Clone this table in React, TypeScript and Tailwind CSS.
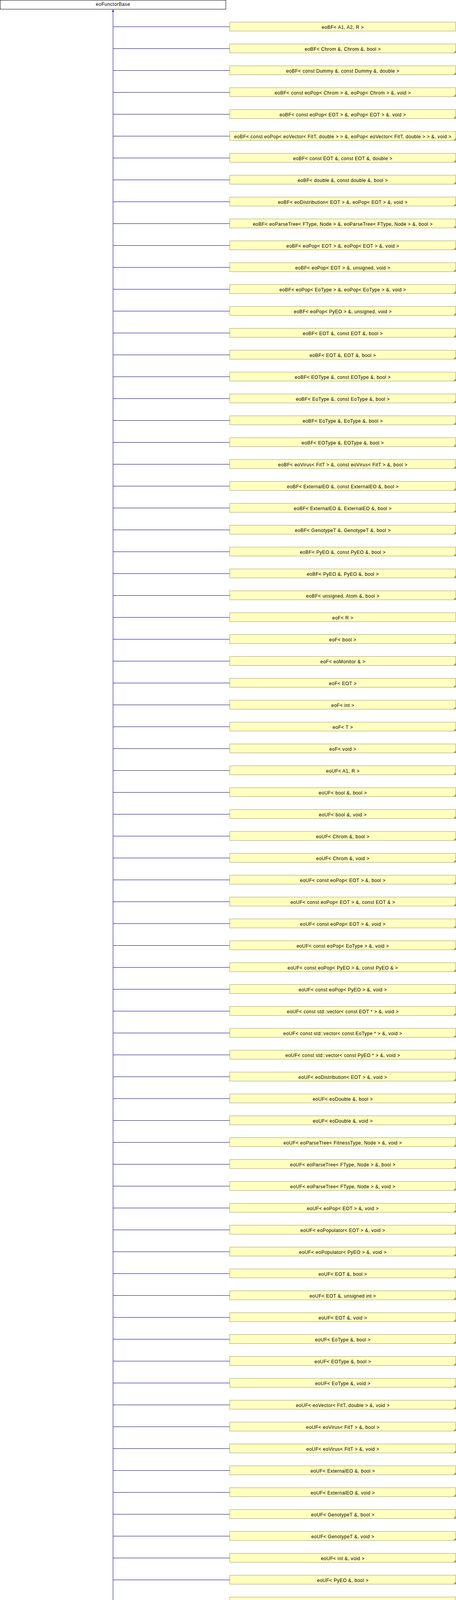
import React from "react";

// derived classes of eoFunctorBase, in graph order
const CHILDREN: string[] = [
  "eoBF< A1, A2, R >",
  "eoBF< Chrom &, Chrom &, bool >",
  "eoBF< const Dummy &, const Dummy &, double >",
  "eoBF< const eoPop< Chrom > &, eoPop< Chrom > &, void >",
  "eoBF< const eoPop< EOT > &, eoPop< EOT > &, void >",
  "eoBF< const eoPop< eoVector< FitT, double > > &, eoPop< eoVector< FitT, double > > &, void >",
  "eoBF< const EOT &, const EOT &, double >",
  "eoBF< double &, const double &, bool >",
  "eoBF< eoDistribution< EOT > &, eoPop< EOT > &, void >",
  "eoBF< eoParseTree< FType, Node > &, eoParseTree< FType, Node > &, bool >",
  "eoBF< eoPop< EOT > &, eoPop< EOT > &, void >",
  "eoBF< eoPop< EOT > &, unsigned, void >",
  "eoBF< eoPop< EoType > &, eoPop< EoType > &, void >",
  "eoBF< eoPop< PyEO > &, unsigned, void >",
  "eoBF< EOT &, const EOT &, bool >",
  "eoBF< EOT &, EOT &, bool >",
  "eoBF< EOType &, const EOType &, bool >",
  "eoBF< EoType &, const EoType &, bool >",
  "eoBF< EoType &, EoType &, bool >",
  "eoBF< EOType &, EOType &, bool >",
  "eoBF< eoVirus< FitT > &, const eoVirus< FitT > &, bool >",
  "eoBF< ExternalEO &, const ExternalEO &, bool >",
  "eoBF< ExternalEO &, ExternalEO &, bool >",
  "eoBF< GenotypeT &, GenotypeT &, bool >",
  "eoBF< PyEO &, const PyEO &, bool >",
  "eoBF< PyEO &, PyEO &, bool >",
  "eoBF< unsigned, Atom &, bool >",
  "eoF< R >",
  "eoF< bool >",
  "eoF< eoMonitor & >",
  "eoF< EOT >",
  "eoF< int >",
  "eoF< T >",
  "eoF< void >",
  "eoUF< A1, R >",
  "eoUF< bool &, bool >",
  "eoUF< bool &, void >",
  "eoUF< Chrom &, bool >",
  "eoUF< Chrom &, void >",
  "eoUF< const eoPop< EOT > &, bool >",
  "eoUF< const eoPop< EOT > &, const EOT & >",
  "eoUF< const eoPop< EOT > &, void >",
  "eoUF< const eoPop< EoType > &, void >",
  "eoUF< const eoPop< PyEO > &, const PyEO & >",
  "eoUF< const eoPop< PyEO > &, void >",
  "eoUF< const std::vector< const EOT * > &, void >",
  "eoUF< const std::vector< const EoType * > &, void >",
  "eoUF< const std::vector< const PyEO * > &, void >",
  "eoUF< eoDistribution< EOT > &, void >",
  "eoUF< eoDouble &, bool >",
  "eoUF< eoDouble &, void >",
  "eoUF< eoParseTree< FitnessType, Node > &, void >",
  "eoUF< eoParseTree< FType, Node > &, bool >",
  "eoUF< eoParseTree< FType, Node > &, void >",
  "eoUF< eoPop< EOT > &, void >",
  "eoUF< eoPopulator< EOT > &, void >",
  "eoUF< eoPopulator< PyEO > &, void >",
  "eoUF< EOT &, bool >",
  "eoUF< EOT &, unsigned int >",
  "eoUF< EOT &, void >",
  "eoUF< EoType &, bool >",
  "eoUF< EOType &, bool >",
  "eoUF< EoType &, void >",
  "eoUF< eoVector< FitT, double > &, void >",
  "eoUF< eoVirus< FitT > &, bool >",
  "eoUF< eoVirus< FitT > &, void >",
  "eoUF< ExternalEO &, bool >",
  "eoUF< ExternalEO &, void >",
  "eoUF< GenotypeT &, bool >",
  "eoUF< GenotypeT &, void >",
  "eoUF< int &, void >",
  "eoUF< PyEO &, bool >",
  "eoUF< T &, void >",
];

// these two have no further subclasses shown (no folded corner)
const LEAVES = new Set(["eoBF< A1, A2, R >", "eoF< R >"]);

const font = "font-['Liberation_Sans',Arial,sans-serif] text-[12px] tracking-[0.5px] text-black whitespace-nowrap";

function Corner() {
  return (
    <svg
      className="absolute right-0 bottom-0"
      width="6"
      height="6"
      viewBox="0 0 6 6"
      shapeRendering="crispEdges"
    >
      <polygon points="6,0 6,6 0,6" fill="#a0a060" />
    </svg>
  );
}

function ChildRow({ name, last }: { name: string; last: boolean }) {
  return (
    <div className="flex h-[56px]">
      {/* trunk */}
      <div className="flex flex-col w-px">
        <div className="h-[29px] bg-[#000080]" />
        {!last && <div className="flex-1 bg-[#000080]" />}
      </div>
      {/* branch */}
      <div className="flex-1 pt-[28px]">
        <div className="h-px bg-[#000080]" />
      </div>
      <div className="relative mt-[16px] w-[580px] h-[24px] box-border border border-[#a0a060] bg-[#ffffc0] text-center">
        <div className={`${font} pt-[5px] leading-[16px]`}>{name}</div>
        {!LEAVES.has(name) && <Corner />}
      </div>
    </div>
  );
}

export default function App() {
  return (
    <div className="w-[1168px] h-[4112px] bg-white overflow-hidden">
      <div className="w-[579px] h-[24px] box-border border border-black bg-white text-center">
        <div className={`${font} pt-[2px] leading-[16px]`}>eoFunctorBase</div>
      </div>
      {/* inheritance arrow */}
      <svg className="block ml-[286px]" width="7" height="16" viewBox="0 0 7 16" shapeRendering="crispEdges">
        <rect x="3" y="0" width="1" height="16" fill="#000080" />
        <polygon points="3.5,0.5 6,6 1,6" fill="#000080" />
      </svg>
      <div className="ml-[289px]">
        {CHILDREN.map((c, i) => (
          <ChildRow key={c} name={c} last={i === CHILDREN.length - 1} />
        ))}
      </div>
    </div>
  );
}
